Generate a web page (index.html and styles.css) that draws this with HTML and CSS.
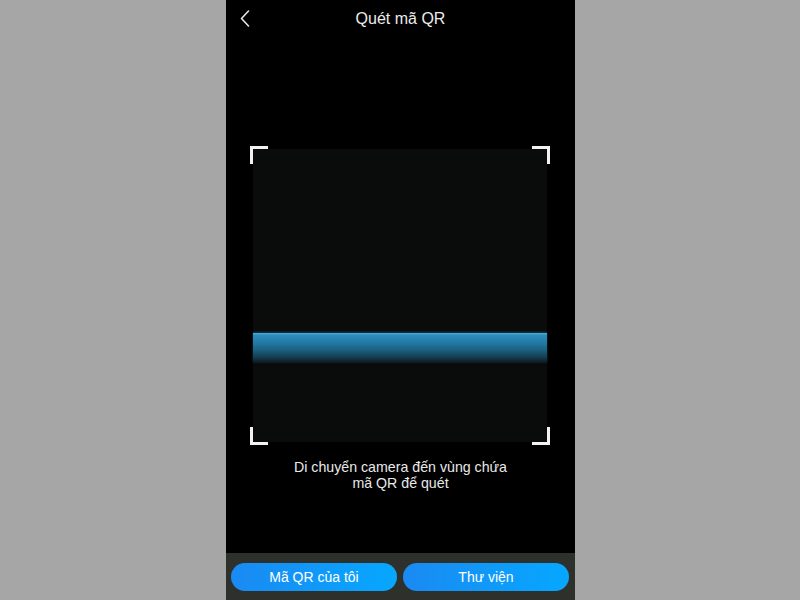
FILE: index.html
```html
<!DOCTYPE html>
<html lang="vi">
<head>
<meta charset="utf-8">
<title>Quét mã QR</title>
<link rel="stylesheet" href="styles.css">
</head>
<body>
<div class="phone">
  <header class="topbar">
    <span class="back">
      <svg width="10" height="17" viewBox="0 0 10 17"><path d="M8.5 1 L1.5 8.5 L8.5 16" fill="none" stroke="#e6e6e6" stroke-width="1.6" stroke-linecap="round" stroke-linejoin="round"/></svg>
    </span>
    <h1 class="title">Quét mã QR</h1>
  </header>
  <main class="scanner">
    <div class="frame">
      <div class="area">
        <div class="line"></div>
      </div>
      <span class="corner tl"></span>
      <span class="corner tr"></span>
      <span class="corner bl"></span>
      <span class="corner br"></span>
    </div>
    <p class="hint">Di chuyển camera đến vùng chứa<br>mã QR để quét</p>
  </main>
  <footer class="bottombar">
    <button class="btn">Mã QR của tôi</button>
    <button class="btn">Thư viện</button>
  </footer>
</div>
</body>
</html>
```
FILE: styles.css
```css
html, body {
  margin: 0;
  padding: 0;
  height: 100%;
}
body {
  background: #a6a6a6;
  display: flex;
  justify-content: center;
  font-family: "Liberation Sans", Arial, sans-serif;
}
.phone {
  width: 349px;
  height: 600px;
  background: #000;
  display: flex;
  flex-direction: column;
  margin-left: 1px;
}
.topbar {
  height: 37px;
  position: relative;
  display: flex;
  align-items: center;
  justify-content: center;
}
.back {
  position: absolute;
  left: 14px;
  top: 10px;
  display: flex;
}
.title {
  margin: 0;
  font-size: 16px;
  font-weight: normal;
  color: #ececec;
  line-height: 20px;
}
.scanner {
  flex: 1;
  display: flex;
  flex-direction: column;
  align-items: center;
}
.frame {
  position: relative;
  width: 300px;
  height: 299px;
  margin-top: 109px;
  margin-left: -1px;
  padding: 3px;
  box-sizing: border-box;
}
.area {
  width: 100%;
  height: 100%;
  background: #0a0c0b;
  position: relative;
}
.line {
  position: absolute;
  left: 0;
  right: 0;
  top: 184px;
  height: 30px;
  background: linear-gradient(to bottom, #45aee0 0%, #2c8dbb 8%, #237ca6 30%, #1b6283 55%, #143f52 80%, #0d171b 100%);
  box-shadow: 0 -1px 2px rgba(60, 160, 210, 0.35);
}
.corner {
  position: absolute;
  width: 15px;
  height: 15px;
  border: 0 solid #f2f2f2;
}
.tl { left: 0; top: 0; border-top-width: 3px; border-left-width: 3px; }
.tr { right: 0; top: 0; border-top-width: 3px; border-right-width: 3px; }
.bl { left: 0; bottom: 0; border-bottom-width: 3px; border-left-width: 3px; }
.br { right: 0; bottom: 0; border-bottom-width: 3px; border-right-width: 3px; }
.hint {
  margin: 14px 0 0;
  font-size: 14.2px;
  line-height: 16px;
  color: #e8e8e8;
  text-align: center;
}
.bottombar {
  height: 47px;
  background: #2e302c;
  display: flex;
  gap: 6px;
  padding: 10px 6px 9px 5px;
  box-sizing: border-box;
}
.btn {
  flex: 1;
  height: 28px;
  border: none;
  border-radius: 14px;
  background: linear-gradient(to right, #1a8af2, #06a7ff);
  color: #fff;
  font-family: "Liberation Sans", Arial, sans-serif;
  font-size: 14px;
  padding: 0;
}
```
